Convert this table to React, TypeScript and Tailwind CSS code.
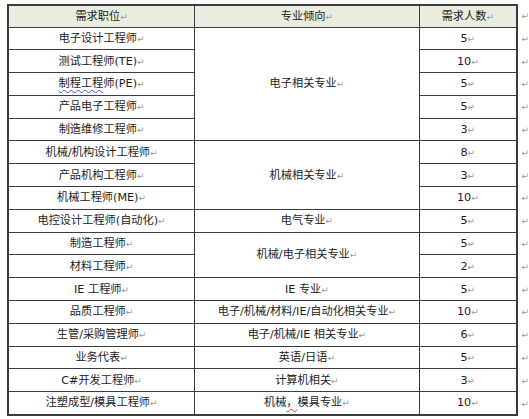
import React from "react";

type Row = {
  job: React.ReactNode;
  major?: React.ReactNode;
  span?: number;
  count: string;
};

const Mark = () => <span className="text-[9px] text-[#9a9a9a] align-middle">↵</span>;

const rows: Row[] = [
  { job: "电子设计工程师", major: "电子相关专业", span: 5, count: "5" },
  { job: "测试工程师(TE)", count: "10" },
  {
    job: (
      <>
        <span className="underline decoration-wavy decoration-[#3b4fd8] decoration-1 underline-offset-2">制程工程</span>
        师(PE)
      </>
    ),
    count: "5",
  },
  { job: "产品电子工程师", count: "5" },
  { job: "制造维修工程师", count: "3" },
  { job: "机械/机构设计工程师", major: "机械相关专业", span: 3, count: "8" },
  { job: "产品机构工程师", count: "3" },
  { job: "机械工程师(ME)", count: "10" },
  { job: "电控设计工程师(自动化)", major: "电气专业", span: 1, count: "5" },
  { job: "制造工程师", major: "机械/电子相关专业", span: 2, count: "5" },
  { job: "材料工程师", count: "2" },
  { job: "IE 工程师", major: "IE 专业", span: 1, count: "5" },
  { job: "品质工程师", major: "电子/机械/材料/IE/自动化相关专业", span: 1, count: "10" },
  { job: "生管/采购管理师", major: "电子/机械/IE 相关专业", span: 1, count: "6" },
  { job: "业务代表", major: "英语/日语", span: 1, count: "5" },
  { job: "C#开发工程师", major: "计算机相关", span: 1, count: "3" },
  {
    job: "注塑成型/模具工程师",
    major: (
      <>
        机械
        <span className="underline decoration-wavy decoration-[#d83b3b] decoration-1 underline-offset-2">，</span>
        模具专业
      </>
    ),
    span: 1,
    count: "10",
  },
];

export default function App() {
  const cell = "border border-[#3c3c3c] text-center align-middle p-0";
  return (
    <div
      className="w-[529px] h-[419px] bg-white pt-[4px] pl-[7px] text-[#1c1c1c] text-[11.2px] leading-none"
      style={{ fontFamily: '"DejaVu Sans", "Noto Sans CJK SC", sans-serif' }}
    >
      <table className="table-fixed border-collapse">
        <colgroup>
          <col className="w-[187px]" />
          <col className="w-[225px]" />
          <col className="w-[98px]" />
          <col className="w-[12px]" />
        </colgroup>
        <tbody>
          <tr className="h-[22px] bg-[#e9ecdf]">
            <td className={`${cell} border-t-2 border-l-2`}>
              需求职位<Mark />
            </td>
            <td className={`${cell} border-t-2`}>
              专业倾向<Mark />
            </td>
            <td className={`${cell} border-t-2 border-r-2`}>
              需求人数<Mark />
            </td>
            <td className="bg-white text-right align-middle">
              <Mark />
            </td>
          </tr>
          {rows.map((r, i) => {
            const last = i === rows.length - 1;
            return (
              <tr key={i} className="h-[22.8px]">
                <td className={`${cell} border-l-2 ${last ? "border-b-2" : ""}`}>
                  {r.job}
                  <Mark />
                </td>
                {r.major !== undefined && (
                  <td className={`${cell} ${last ? "border-b-2" : ""}`} rowSpan={r.span}>
                    {r.major}
                    <Mark />
                  </td>
                )}
                <td className={`${cell} border-r-2 ${last ? "border-b-2" : ""}`}>
                  {r.count}
                  <Mark />
                </td>
                <td className="text-right align-middle">
                  <Mark />
                </td>
              </tr>
            );
          })}
        </tbody>
      </table>
    </div>
  );
}
